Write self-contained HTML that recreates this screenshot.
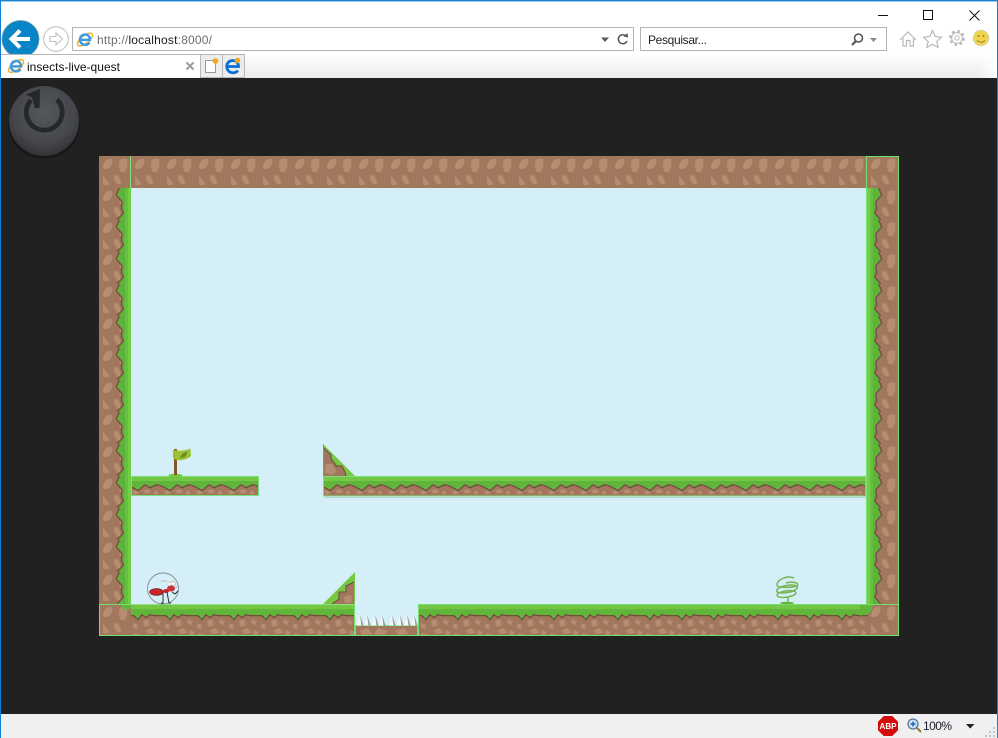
<!DOCTYPE html>
<html><head><meta charset="utf-8"><title>insects-live-quest</title>
<style>html,body{margin:0;padding:0;background:#212121;overflow:hidden;width:998px;height:738px}
svg{display:block}
text{font-family:"Liberation Sans",sans-serif}</style></head>
<body>
<svg width="998" height="738" viewBox="0 0 998 738" xmlns="http://www.w3.org/2000/svg">
<defs>
<linearGradient id="tabrow" x1="0" y1="0" x2="0" y2="1"><stop offset="0" stop-color="#fff"/><stop offset="1" stop-color="#ebebeb"/></linearGradient>
<linearGradient id="tabfade" x1="0" y1="0" x2="1" y2="0"><stop offset="0" stop-color="#fff" stop-opacity="0"/><stop offset="1" stop-color="#fff"/></linearGradient>
<radialGradient id="pw" cx="0.5" cy="0.38" r="0.62"><stop offset="0" stop-color="#54575c"/><stop offset="0.7" stop-color="#45474c"/><stop offset="1" stop-color="#323336"/></radialGradient>

<!-- dirt tile -->
<g id="blobs">
<path d="M5 8 C6 4 8 3 12 2.500 C14 4 14 7 11.500 10.500 C9.500 13 6 14 4 12.500 C3.500 11 4 9.500 5 8Z"/>
<path d="M21 3.500 C23 2.500 26 2 28 3 C29 7 28 12 26.500 15.500 C24 17 22 16.500 21 15 C20 11 19.500 7 21 3.500Z"/>
<path d="M4 20 L10.500 28 L8 29.500 L4 29Z"/>
<path d="M15 20 C17 18.500 18.500 18.500 19.500 20 C20.500 23 22 25 22 27.500 C20 29.500 17.500 28 16 25.500 C15 24 14.500 22 15 20Z"/>
</g>
<pattern id="dirt" x="99" y="156" width="32" height="32" patternUnits="userSpaceOnUse">
<rect width="32" height="32" fill="#a1775d"/><use href="#blobs" fill="#b78d72"/>
</pattern>
<pattern id="dirtV" x="99" y="188" width="32" height="32" patternUnits="userSpaceOnUse">
<rect width="32" height="32" fill="#a1775d"/><use href="#blobs" fill="#b78d72"/>
</pattern>

<!-- left wall grass -->
<pattern id="wallL" x="99" y="188" width="32" height="32" patternUnits="userSpaceOnUse">
<path d="M32 0 L21 0 L18 7 L24 14 L23 20 L25 25 L19 32 L32 32Z" fill="#5db239"/>
<path d="M21 0 L18 7 L24 14 L23 20 L25 25 L19 32" fill="none" stroke="#70483a" stroke-width="1.200" transform="translate(-0.7 0)"/>
<rect x="26" width="3" height="32" fill="#66bf3e"/>
<rect x="29" width="3" height="32" fill="#72cf48"/>
</pattern>
<pattern id="wallR" x="867" y="188" width="32" height="32" patternUnits="userSpaceOnUse">
<path d="M0 0 L11 0 L14 7 L8 14 L9 20 L7 25 L13 32 L0 32Z" fill="#5db239"/>
<path d="M11 0 L14 7 L8 14 L9 20 L7 25 L13 32" fill="none" stroke="#70483a" stroke-width="1.200" transform="translate(0.7 0)"/>
<rect x="3" width="3" height="32" fill="#66bf3e"/>
<rect x="0" width="3" height="32" fill="#72cf48"/>
</pattern>

<!-- thin platform -->
<pattern id="plat" x="131" y="476" width="32" height="20" patternUnits="userSpaceOnUse">
<rect width="32" height="20" fill="#a1775d"/>
<path d="M1 15 L6 14 L8 17 L3 19Z M12 14 L18 13 L20 16 L14 18Z M24 14 L28 17 L23 19Z" fill="#b78d72"/>
<path d="M0 0H32V10 L26 8 L19 11 L14 8 L7 14 L0 10Z" fill="#62b53b"/>
<rect width="32" height="5" fill="#74c745"/>
<path d="M32 10 L26 8 L19 11 L14 8 L7 14 L0 10" fill="none" stroke="#70483a" stroke-width="1.200" transform="translate(0 0.7)"/>
</pattern>

<!-- floor -->
<pattern id="floor" x="131" y="604" width="32" height="32" patternUnits="userSpaceOnUse">
<rect width="32" height="32" fill="#a1775d"/>
<path d="M12 17 L17 15 L19 21 L13 23Z M25 15 L30 17 L28 21 L24 19Z M2 19 L7 21 L6 25 L2 24Z M15 26 L21 24 L24 29 L17 30Z M27 26 L31 28 L31 31 L26 31Z M3 29 L9 31 L2 31Z" fill="#b78d72"/>
<path d="M0 0H32V11 L23 11 L19 10 L15 13 L11 10 L7 15 L3 11 L0 11Z" fill="#62b53b"/>
<rect width="32" height="5" fill="#74c745"/>
<path d="M32 11 L23 11 L19 10 L15 13 L11 10 L7 15 L3 11 L0 11" fill="none" stroke="#70483a" stroke-width="1.200" transform="translate(0 0.7)"/>
</pattern>

<g id="ie">
<ellipse cx="8" cy="8" rx="9" ry="4" fill="none" stroke="#f0b429" stroke-width="1.500" transform="rotate(-38 8 8)"/>
<path d="M3.400 8.400 H13 C13 5 10.800 3 8.200 3 C5.200 3 3 5.300 3 8.200 C3 11.200 5.200 13.400 8.200 13.400 C10.100 13.400 11.600 12.500 12.500 11" fill="none" stroke="#3f9be2" stroke-width="2.500"/>
</g>
</defs>

<!-- page bg -->
<rect width="998" height="738" fill="#212121"/>

<!-- browser chrome -->
<rect width="998" height="78" fill="#fff"/>
<rect x="0" y="54" width="998" height="24" fill="url(#tabrow)"/>
<rect x="978" y="54" width="20" height="24" fill="url(#tabfade)"/>
<rect x="0" y="0" width="998" height="1.400" fill="#1380d6"/>
<rect x="0" y="0" width="1" height="738" fill="#1380d6"/>
<rect x="997" y="0" width="1" height="738" fill="#1380d6"/>

<!-- window controls -->
<rect x="878" y="15" width="10" height="1" fill="#111"/>
<rect x="923.500" y="10.500" width="9" height="9" fill="none" stroke="#111"/>
<path d="M969.500 10.500 L979.500 20.500 M979.500 10.500 L969.500 20.500" stroke="#111" stroke-width="1" fill="none"/>

<!-- back / forward -->
<circle cx="20.500" cy="39" r="18.500" fill="#0785c7" stroke="#7a98aa" stroke-width=".8"/>
<path d="M12 39 H30 M20 30.500 L11.500 39 L20 47.500" fill="none" stroke="#fff" stroke-width="4"/>
<circle cx="56" cy="39" r="12.300" fill="#fff" stroke="#bdbdbd"/>
<path d="M50 36.500 H56 V33 L62.500 39 L56 45 V41.500 H50Z" fill="none" stroke="#bdbdbd" stroke-width="1"/>

<!-- address bar -->
<rect x="72.500" y="27.500" width="561" height="23" fill="#fff" stroke="#b4b4b4"/>
<use href="#ie" x="77" y="31.500"/>
<text x="97" y="44" font-size="12" textLength="115" lengthAdjust="spacing" fill="#6d6d6d">http://<tspan fill="#1a1a1a">localhost</tspan>:8000/</text>
<path d="M601 37.500 H609 L605 42Z" fill="#5a5a5a"/>
<path d="M626 36 A4.500 4.500 0 1 0 627 41" fill="none" stroke="#555" stroke-width="1.500"/><path d="M623.500 36.500 L628 37.500 L627.500 33Z" fill="#555"/>

<!-- search -->
<rect x="640.500" y="27.500" width="246" height="23" fill="#fff" stroke="#b4b4b4"/>
<text x="648" y="44" font-size="12" textLength="59" fill="#222">Pesquisar...</text>
<circle cx="858.500" cy="38" r="4" fill="none" stroke="#555" stroke-width="1.600"/>
<path d="M855.500 41.500 L852 45" stroke="#555" stroke-width="2.200"/>
<path d="M870 38 H877 L873.500 42Z" fill="#8a8a8a"/>

<!-- right tools -->
<path d="M900 40 L908 32 L916 40 M903 38 V46 H906.500 V40.500 H910 V46 H913.500 V38" fill="none" stroke="#b9b9b9" stroke-width="1.200"/>
<path d="M932.500 30.500 L935.200 36.500 L941.500 37.200 L936.800 41.400 L938.200 47.500 L932.500 44.300 L926.800 47.500 L928.200 41.400 L923.500 37.200 L929.800 36.500Z" fill="none" stroke="#b9b9b9" stroke-width="1.200"/>
<circle cx="957" cy="38" r="6.800" fill="none" stroke="#b9b9b9" stroke-width="2.400" stroke-dasharray="2.600 2.740"/>
<circle cx="957" cy="38" r="5.400" fill="#fff" stroke="#b9b9b9" stroke-width="1"/>
<circle cx="957" cy="38" r="2.200" fill="#fff" stroke="#b9b9b9" stroke-width="1"/>
<circle cx="981" cy="38" r="7.800" fill="#f2d44c" stroke="#cfcfc0" stroke-width=".8"/>
<circle cx="978.500" cy="36" r="1" fill="#9a8426"/><circle cx="983.500" cy="36" r="1" fill="#9a8426"/>
<path d="M977 40.500 Q981 44 985 40.500" fill="none" stroke="#9a8426"/>

<!-- tab -->
<rect x="1" y="54" width="200" height="24" fill="#fff"/>
<path d="M1 54.500 H200.500 V78" fill="none" stroke="#b8b8b8"/>
<use href="#ie" x="8" y="58"/>
<text x="27" y="71" font-size="12" textLength="93" fill="#111">insects-live-quest</text>
<path d="M186.500 62.500 L193.500 69.500 M193.500 62.500 L186.500 69.500" stroke="#9d9d9d" stroke-width="2"/>
<rect x="200.500" y="54.500" width="22" height="23" fill="#ededed" stroke="#b8b8b8"/>
<rect x="222.500" y="54.500" width="22" height="23" fill="#ededed" stroke="#b8b8b8"/>
<path d="M205.500 60.500 H213 L215.500 63 V72.500 H205.500Z" fill="#fff" stroke="#9a9a9a"/>
<circle cx="215.500" cy="61" r="2.800" fill="#f3a91f"/>
<path d="M227.500 66.500 H238.500 C238.500 62.800 235.800 60.500 232.800 60.500 C229.300 60.500 226.800 63 226.800 66.300 C226.800 70 229.300 72.800 232.900 72.800 C235 72.800 236.800 72 238 70.500" fill="none" stroke="#0c6fd0" stroke-width="2.800"/>
<circle cx="237.500" cy="60.500" r="2.800" fill="#f3a91f"/>

<!-- status bar -->
<rect x="1" y="714" width="996" height="24" fill="#f0f0f0"/>
<path d="M883.800 716 H892.200 L898 721.800 V730.200 L892.200 736 H883.800 L878 730.200 V721.800Z" fill="#d30d0d"/>
<text x="888" y="729" font-size="8" font-weight="700" fill="#fff" text-anchor="middle">ABP</text>
<circle cx="913" cy="724" r="5" fill="#cfe3f5" stroke="#54779c" stroke-width="1.300"/>
<path d="M910.500 724 H915.500 M913 721.500 V726.500" stroke="#1d5fb0" stroke-width="1.400"/>
<path d="M917 728 L921 732" stroke="#9a7a3c" stroke-width="2"/>
<text x="923" y="730" font-size="12" fill="#1a1a2a" textLength="29">100%</text>
<path d="M966 724 H974.500 L970.200 728.500Z" fill="#222"/>
<g fill="#c4c4c4"><rect x="993" y="727" width="2" height="2"/><rect x="993" y="731" width="2" height="2"/><rect x="989" y="731" width="2" height="2"/><rect x="993" y="735" width="2" height="2"/><rect x="989" y="735" width="2" height="2"/><rect x="985" y="735" width="2" height="2"/></g>

<!-- power button -->
<ellipse cx="44" cy="125" rx="36" ry="34" fill="#000" opacity=".25"/>
<circle cx="44" cy="121" r="35" fill="url(#pw)"/>
<path d="M57 99.500 A18 18 0 1 1 31 100" fill="none" stroke="#26272a" stroke-width="4.800"/>
<path d="M39.500 108 L40 89 L26 94.500 L32 97.500 L35 108Z" fill="#26272a"/>

<!-- game sky -->
<rect x="99" y="156" width="800" height="480" fill="#d5eff9"/>

<!-- top -->
<rect x="99" y="156" width="800" height="32" fill="url(#dirt)"/>
<!-- walls -->
<rect x="99" y="188" width="32" height="416" fill="url(#dirtV)"/>
<rect x="99" y="188" width="32" height="416" fill="url(#wallL)"/>
<rect x="867" y="188" width="32" height="416" fill="url(#dirtV)"/>
<rect x="867" y="188" width="32" height="416" fill="url(#wallR)"/>
<rect x="130" y="156" width="1" height="32" fill="#7fe37a"/>
<rect x="866.500" y="156.500" width="32" height="448" fill="none" stroke="#74df6c"/>

<!-- platforms -->
<rect x="131" y="476" width="128" height="20" fill="url(#plat)"/>
<rect x="131.500" y="476.500" width="127" height="19" fill="none" stroke="#7be07a"/>
<rect x="323" y="476" width="543" height="20" fill="url(#plat)"/>
<rect x="323.500" y="476.500" width="542" height="19.500" fill="none" stroke="#7be07a"/>
<rect x="324" y="497" width="542" height="1" fill="#b8cdd6"/>

<!-- upper ramp -->
<path d="M323 444 L355 476 H323Z" fill="#74c842"/>
<path d="M323.500 448 L331 455 V459 L336 465 V466 L342 466 L345 472 L346 476 H323.500Z" fill="#a1775d"/>
<path d="M323.500 448 L331 455 V459 L336 465 V466 L342 466 L345 472 L346 476" fill="none" stroke="#70483a" stroke-width="1"/>
<path d="M326 464 H332 L337 472 L330 475 L325 472Z" fill="#b78d72"/>
<path d="M323.500 444.500 V476" stroke="#5db239" stroke-width="1"/>

<!-- floor -->
<rect x="99" y="604" width="256" height="32" fill="url(#floor)"/>
<rect x="418" y="604" width="481" height="32" fill="url(#floor)"/>
<rect x="99" y="604" width="32" height="32" fill="url(#dirtV)"/>
<path d="M121 604 H131 V608 L128 610 L123 609Z" fill="#62b53b"/>
<rect x="868" y="604" width="31" height="32" fill="url(#dirtV)"/>
<path d="M860 604 H873 L871 612 L860 616Z" fill="#62b53b"/>
<rect x="99.500" y="604.500" width="255" height="31" fill="none" stroke="#74df6c"/>
<rect x="418.500" y="604.500" width="480" height="31" fill="none" stroke="#74df6c"/>
<rect x="131" y="604" width="224" height="1" fill="#8ce07f"/>

<!-- lower ramp -->
<path d="M355 572 V604 H323Z" fill="#74c842"/>
<path d="M354 582 L346 586 V592 L339 592 V599 L332 604 H354Z" fill="#a1775d"/>
<path d="M354 582 L346 586 V592 L339 592 V599 L332 604" fill="none" stroke="#70483a" stroke-width="1"/>
<path d="M344 597 L351 595 L352 602 L345 603Z" fill="#b78d72"/>

<!-- spike pit -->
<rect x="355" y="626" width="63" height="10" fill="#a1775d"/>
<path d="M360 630 L368 628 L372 634 L362 635Z M378 628 L388 631 L384 635 L374 634Z M395 631 L404 628 L408 634 L398 635Z" fill="#b78d72"/>
<rect x="355.500" y="625.500" width="62" height="10" fill="none" stroke="#74df6c"/>
<g fill="#f2f4f5">
<path d="M356.500 625.500 L360 614.500 L363.500 625.500Z"/><path d="M363.500 625.500 L367 614.500 L370.500 625.500Z"/><path d="M371.500 625.500 L375 614.500 L378.500 625.500Z"/><path d="M378.500 625.500 L382 614.500 L385.500 625.500Z"/><path d="M388.500 625.500 L392 614.500 L395.500 625.500Z"/><path d="M396.500 625.500 L400 614.500 L403.500 625.500Z"/><path d="M403.500 625.500 L407 614.500 L410.500 625.500Z"/><path d="M410.500 625.500 L414 614.500 L417.500 625.500Z"/>
</g>
<g fill="#8f9599">
<path d="M360 614.500 L363.500 625.500 H361.500Z"/><path d="M367 614.500 L370.500 625.500 H368.500Z"/><path d="M375 614.500 L378.500 625.500 H376.500Z"/><path d="M382 614.500 L385.500 625.500 H383.500Z"/><path d="M392 614.500 L395.500 625.500 H393.500Z"/><path d="M400 614.500 L403.500 625.500 H401.500Z"/><path d="M407 614.500 L410.500 625.500 H408.500Z"/><path d="M414 614.500 L417.500 625.500 H415.500Z"/>
</g>

<!-- flag -->
<ellipse cx="175.500" cy="475.500" rx="7" ry="1.800" fill="#74c842"/>
<rect x="174" y="449" width="3" height="26" fill="#8a5326"/>
<path d="M173 450 Q182 452 190.500 448.500 L191 456 Q188 459 182 460 Q177 461 173 458Z" fill="#9cc233"/>
<path d="M180 458 Q181 453 187 451.500 Q187 458 180 458Z" fill="#6f8f25"/>

<!-- ant -->
<circle cx="163" cy="588.500" r="15.500" fill="none" stroke="#858b8d" stroke-width=".9"/>
<ellipse cx="156.500" cy="592" rx="7" ry="3.500" fill="#c9242a" stroke="#3a1414" stroke-width=".5"/>
<ellipse cx="166" cy="591" rx="3" ry="2" fill="#c9242a"/>
<ellipse cx="171" cy="588.500" rx="4" ry="3" fill="#cf3336"/>
<circle cx="173" cy="583.500" r="2.200" fill="#fff" stroke="#777" stroke-width=".5"/>
<circle cx="169.500" cy="584" r="1.700" fill="#fff" stroke="#999" stroke-width=".4"/>
<path d="M163 592 L163 603 H161 M167 592 L169 603 H171 M172 592 L175 594 L178 591" fill="none" stroke="#222" stroke-width=".9"/>
<path d="M161 581 H167 M175 587 H179" stroke="#aaa" stroke-width=".7"/>

<!-- spring -->
<g fill="none" stroke="#76b556" stroke-width="1.500">
<path d="M794 578 C786 575 777 580 777 585 C777 588 790 588 797 586 C800 583 793 581 786 583"/>
<ellipse cx="787" cy="589" rx="10.500" ry="3.600" transform="rotate(-10 787 589)"/>
<ellipse cx="786.500" cy="594" rx="9.500" ry="3.200" transform="rotate(-8 786.500 594)"/>
<path d="M788 597 V602"/>
</g>
<ellipse cx="787" cy="603" rx="7" ry="1.300" fill="#62b53b"/>
</svg>
</body></html>
